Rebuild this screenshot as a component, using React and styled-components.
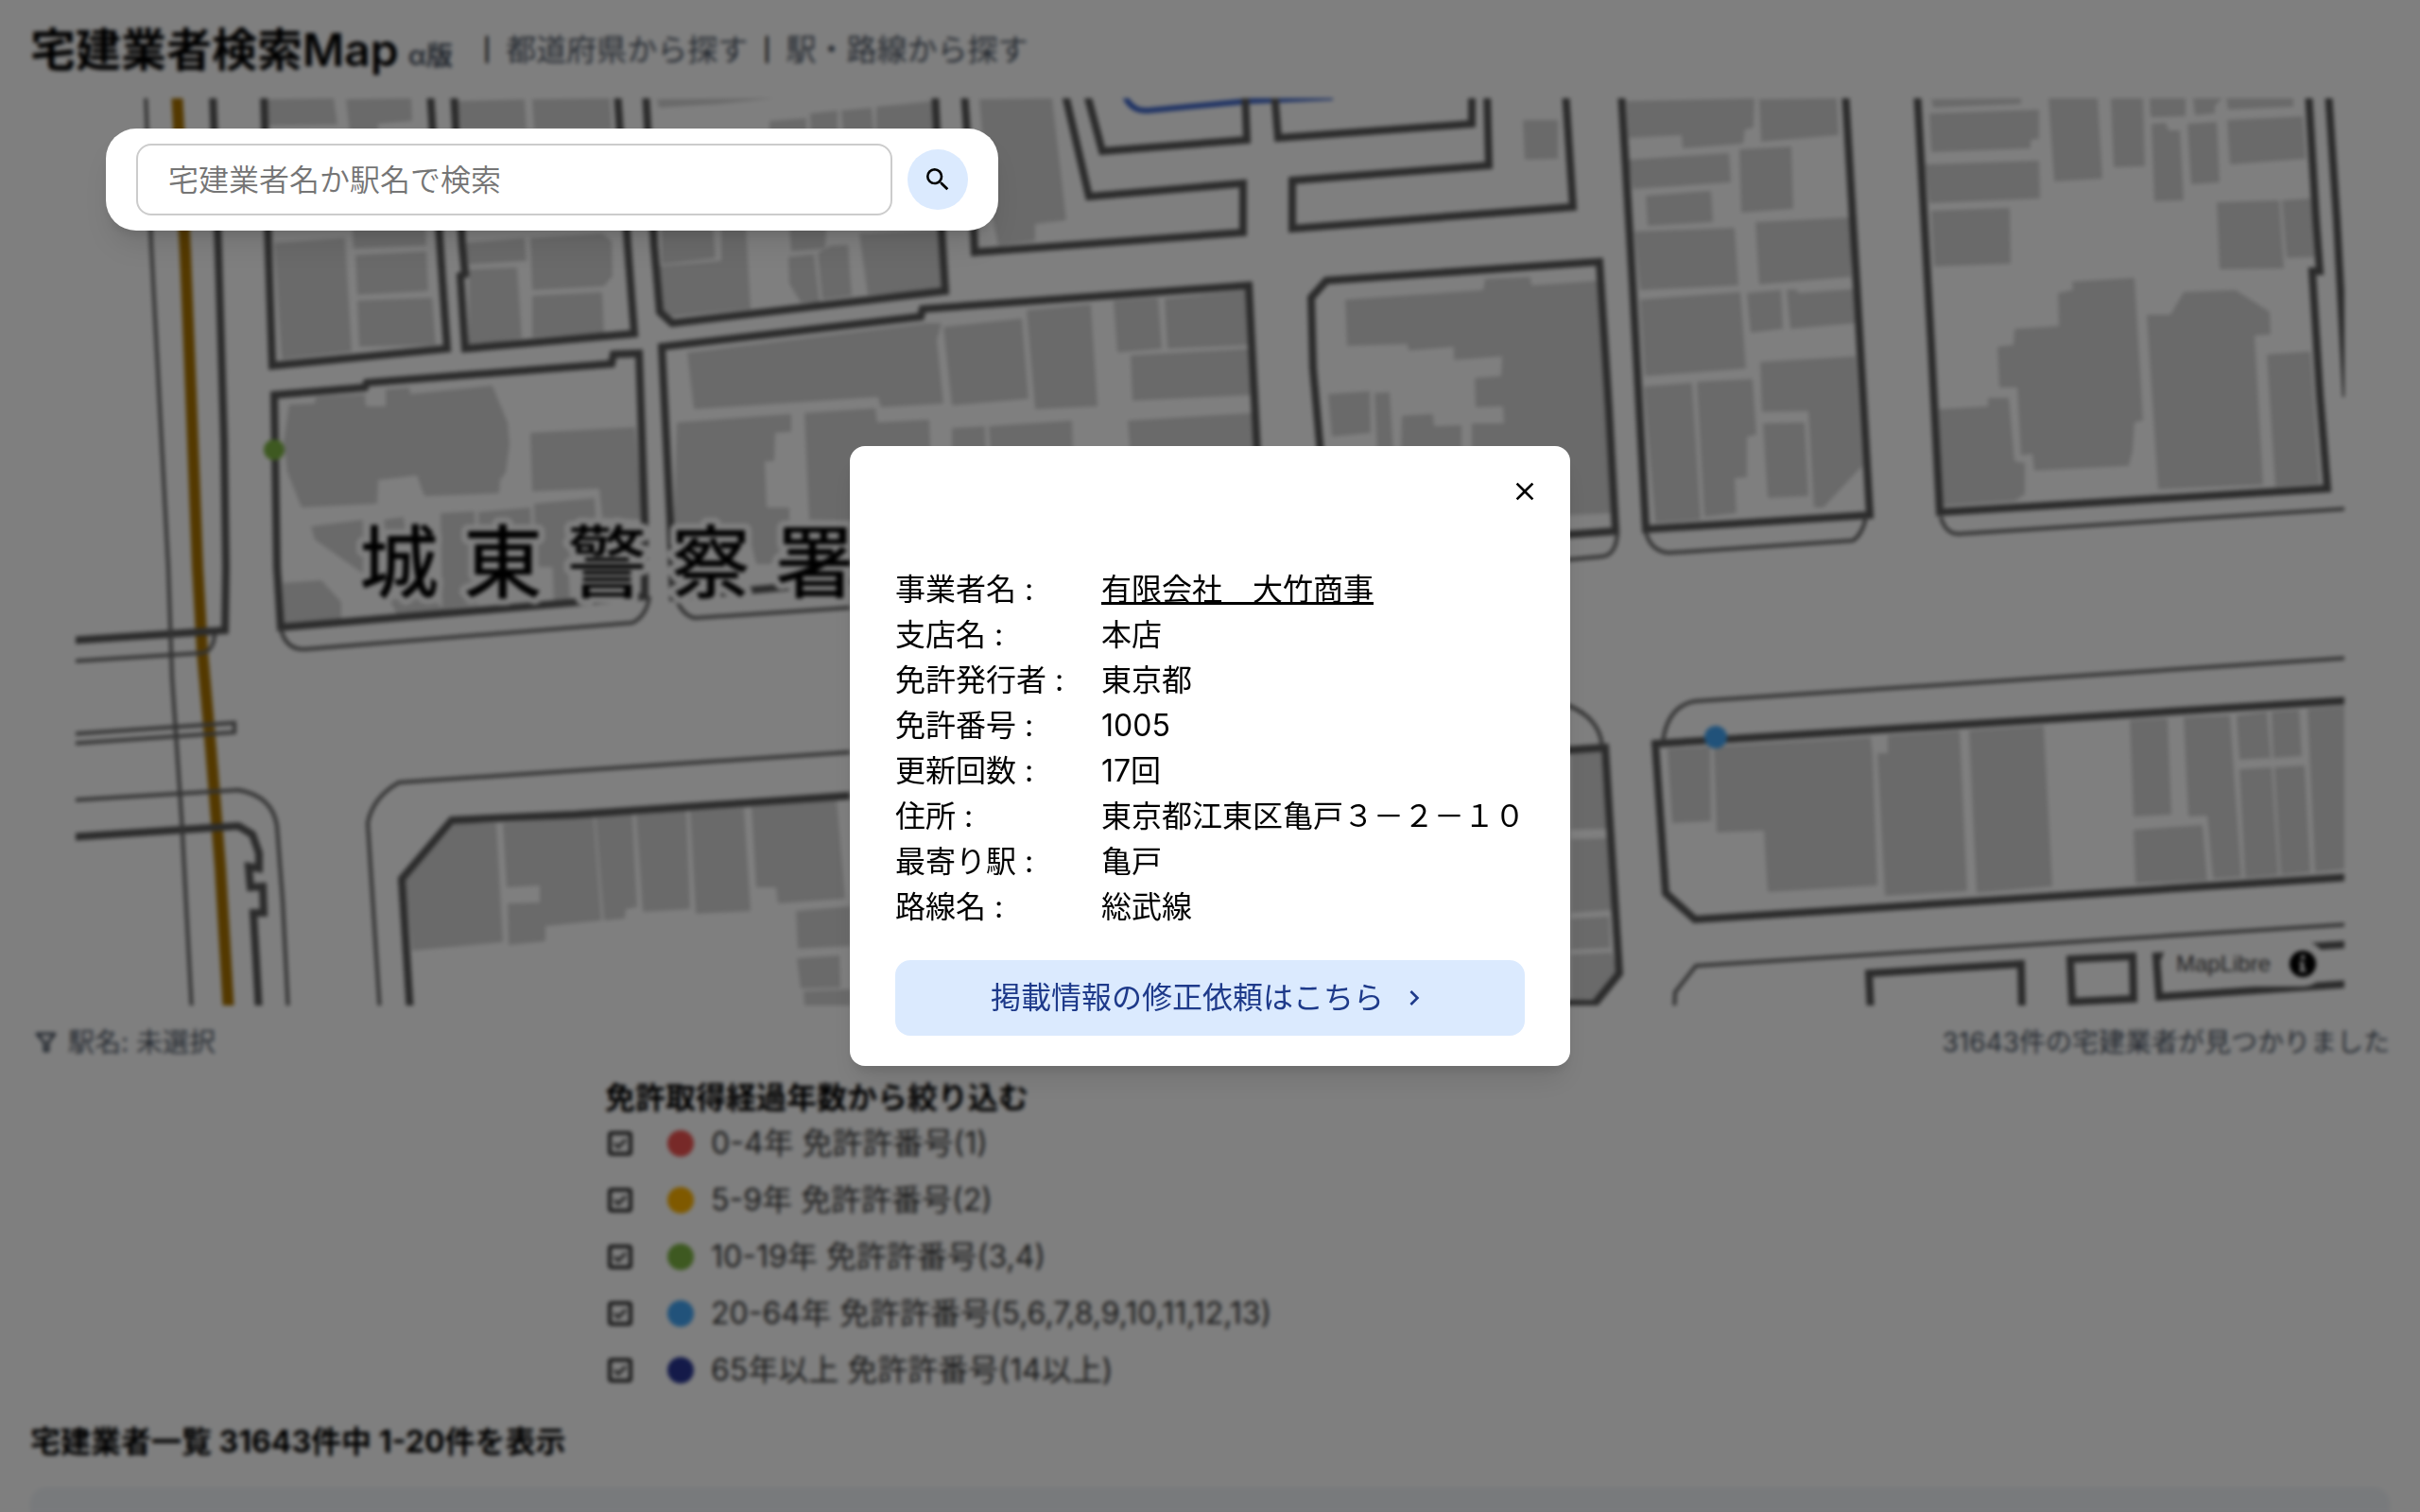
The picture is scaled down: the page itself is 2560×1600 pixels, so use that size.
import React, { useState } from "react";
import styled, { createGlobalStyle } from "styled-components";
import { MdChevronRight, MdClose, MdSearch } from "react-icons/md";

const css = {
  font: `Inter, "Noto Sans CJK JP", sans-serif`,
  text: "#000",
  subText: "#4b5563",
  primaryLight: "#dbeafe",
  primaryDark: "#1e3a8a",
  shadow:
    "0 20px 30px -6px rgba(0, 0, 0, 0.1), 0 8px 12px -4px rgba(0, 0, 0, 0.1)",
};

const years = [
  { id: "y0", color: "#ef5350", label: "0-4年 免許許番号(1)" },
  { id: "y5", color: "#ffb300", label: "5-9年 免許許番号(2)" },
  { id: "y10", color: "#7cb342", label: "10-19年 免許許番号(3,4)" },
  {
    id: "y20",
    color: "#42a5f5",
    label: "20-64年 免許許番号(5,6,7,8,9,10,11,12,13)",
  },
  { id: "y65", color: "#283593", label: "65年以上 免許許番号(14以上)" },
];

const details = [
  { name: "事業者名", value: "有限会社　大竹商事", href: "#company" },
  { name: "支店名", value: "本店" },
  { name: "免許発行者", value: "東京都" },
  { name: "免許番号", value: "1005" },
  { name: "更新回数", value: "17回" },
  { name: "住所", value: "東京都江東区亀戸３－２－１０" },
  { name: "最寄り駅", value: "亀戸" },
  { name: "路線名", value: "総武線" },
];

// building footprints
const buildings = [
  "282,105 353,104 357,132 284,133",
  "366,105 435,104 436,128 400,131 400,140 370,140",
  "290,257 365,252 372,372 298,380",
  "372,225 449,225 451,260 374,263",
  "376,270 451,266 453,308 378,312",
  "378,318 457,315 461,365 380,367",
  "484,107 555,105 557,137 488,137",
  "563,105 645,104 647,137 565,137",
  "492,257 555,252 557,276 496,280",
  "561,252 637,247 647,255 648,292 639,303 563,307",
  "496,285 547,283 552,358 496,367",
  "563,313 637,309 639,352 563,357",
  "306,428 333,427 334,420 386,417 387,430 408,430 408,412 433,410 434,417 521,408 527,423 537,447 539,470 535,500 529,508 528,522 449,525 441,503 400,508 399,533 319,537 304,500 300,467",
  "561,458 672,452 680,550 637,548 634,517 563,520",
  "329,557 384,550 384,607 333,571",
  "406,550 427,547 429,560 406,562",
  "466,543 502,541 505,640 468,645",
  "506,542 561,537 563,600 508,600",
  "565,533 629,527 634,600 567,600",
  "299,617 340,614 361,637 361,655 301,660",
  "412,635 450,628 470,645 420,650",
  "584,585 600,581 603,635 586,637",
  "695,105 820,104 760,110 697,114",
  "814,128 853,125 853,140 814,140",
  "857,120 886,117 886,140 858,140",
  "890,117 922,114 924,140 892,140",
  "927,113 987,107 991,140 927,140",
  "700,240 754,240 757,273 700,280",
  "763,240 789,240 794,327 709,335 697,327 697,282 763,276",
  "835,240 874,240 873,263 837,266",
  "834,272 861,269 867,320 847,320 835,300",
  "865,268 879,260 897,259 901,313 870,317",
  "909,247 994,243 996,307 918,312",
  "1036,105 1113,104 1128,233 1095,237 1095,255 1056,260 1044,200",
  "727,373 980,342 996,342 991,360 998,427 932,431 929,420 734,433",
  "998,346 1081,337 1088,422 1007,429",
  "1086,328 1154,322 1161,430 1095,433",
  "1178,318 1225,315 1229,369 1182,373",
  "1232,316 1320,307 1322,365 1235,369",
  "1196,376 1322,369 1324,418 1198,424",
  "1193,445 1324,437 1327,483 1196,483",
  "716,447 837,438 837,457 820,458 819,488 809,488 811,537 835,537 835,567 815,597 800,597 791,560 713,560",
  "851,437 926,432 928,447 983,444 987,553 856,550",
  "1007,453 1042,451 1043,480 1007,480",
  "1046,451 1134,445 1135,480 1048,480",
  "1611,127 1648,127 1648,168 1613,169",
  "1423,317 1569,307 1571,295 1619,293 1620,302 1692,297 1704,543 1557,550 1557,448 1591,448 1590,430 1561,431 1560,400 1588,398 1589,377 1538,381 1538,367 1490,371 1489,364 1425,366",
  "1405,417 1449,414 1450,458 1409,462",
  "1454,416 1470,415 1474,480 1457,480",
  "1483,440 1516,438 1517,451 1546,450 1546,480 1482,480",
  "1721,107 1856,104 1855,135 1846,137 1844,152 1780,157 1779,143 1723,146",
  "1861,105 1943,104 1945,143 1863,150",
  "1723,169 1829,162 1831,193 1727,200",
  "1741,207 1810,202 1812,235 1743,239",
  "1840,158 1895,155 1897,221 1842,225",
  "1729,245 1835,241 1839,302 1735,307",
  "1857,235 1958,230 1958,293 1861,301",
  "1735,317 1841,309 1847,390 1740,398",
  "1848,310 1884,307 1886,348 1852,352",
  "1890,307 1899,306 1903,310 1960,306 1962,342 1894,348",
  "1862,383 1963,377 1970,493 1929,537 1919,537 1913,435 1864,436",
  "1865,448 1909,447 1913,525 1870,527",
  "1739,409 1790,405 1799,550 1751,553",
  "1795,404 1854,401 1858,460 1848,462 1848,505 1835,506 1837,543 1803,547",
  "2043,105 2138,104 2138,110 2045,114",
  "2041,120 2157,116 2157,147 2148,148 2148,157 2043,161",
  "2037,174 2157,170 2158,210 2041,215",
  "2043,223 2126,220 2127,279 2046,282",
  "2167,104 2219,104 2224,189 2173,192",
  "2233,104 2267,104 2269,176 2236,177",
  "2274,104 2312,104 2312,123 2275,124",
  "2276,131 2291,130 2294,138 2306,138 2310,212 2279,213",
  "2320,104 2351,104 2343,112 2343,120 2322,122",
  "2355,104 2426,104 2426,113 2357,116",
  "2314,131 2345,129 2348,193 2318,195",
  "2356,127 2436,123 2439,168 2359,174",
  "2345,214 2411,212 2416,284 2348,285",
  "2414,212 2444,210 2448,272 2419,273",
  "2192,298 2258,294 2267,445 2258,447 2256,477 2252,493 2152,498 2150,480 2138,482 2134,410 2115,410 2113,367 2130,365 2131,348 2178,345 2177,310 2193,307",
  "2271,333 2296,333 2310,309 2365,307 2401,330 2402,354 2385,355 2394,513 2283,518",
  "2398,375 2444,372 2454,512 2407,515",
  "2051,433 2103,430 2103,421 2125,421 2131,488 2142,490 2142,523 2132,530 2055,535",
  "1764,792 1809,790 1810,869 1769,871",
  "1813,790 1979,780 1981,800 1986,937 1870,944 1866,879 1816,881",
  "1997,778 2073,773 2081,943 1994,948 1986,797 1997,797",
  "2083,773 2162,768 2171,938 2091,945",
  "2253,762 2293,760 2297,862 2257,864",
  "2310,759 2359,757 2371,928 2341,930 2335,863 2315,864",
  "2257,878 2330,873 2335,932 2259,935",
  "2366,757 2398,753 2402,802 2369,804",
  "2403,753 2432,751 2435,800 2405,802",
  "2369,814 2403,812 2410,926 2375,929",
  "2406,812 2438,810 2444,923 2413,926",
  "2441,750 2480,747 2480,920 2449,923",
  "1662,797 1694,795 1700,877 1662,878",
  "1662,888 1700,887 1705,963 1662,966",
  "1662,972 1702,970 1703,1003 1662,1005",
  "1662,1010 1705,1008 1711,1028 1687,1057 1662,1058",
  "482,871 525,871 532,997 436,1006 429,931",
  "532,871 628,864 636,974 577,980 577,996 538,1000 537,956 571,955 571,937 536,939",
  "630,864 669,862 674,960 662,962 661,972 639,974",
  "673,862 726,858 730,962 680,965",
  "730,858 787,855 794,964 736,967",
  "795,854 885,847 894,951 823,956 821,939 800,939",
  "842,964 900,959 900,1001 844,1004",
  "843,1014 888,1011 889,1045 847,1046",
  "850,1049 900,1047 900,1064 851,1064",
];

// block outlines
const blocks = [
  "M225 96 231 267 237 467 239 600 238 667 72 678",
  "M72 886 252 874 267 883 274 903 274 919 263 917 265 939 278 938 279 966 268 966 271 1017 274 1072",
  "M279 96 284 267 288 387 473 369 466 267 455 96",
  "M480 96 489 260 492 290 487 292 492 369 671 353 664 260 653 96",
  "M683 96 692 260 698 330 711 342 1000 308 996 243 989 96",
  "M1020 96 1030 243 1031 267 1315 246 1315 194 1152 208 1126 96",
  "M1149 96 1166 160 1319 148 1317 96",
  "M1348 96 1352 146 1557 131 1557 96",
  "M1573 96 1575 175 1367 191 1367 242 1664 219 1656 96",
  "M1397 480 1389 390 1387 315 1403 297 1692 277 1702 433 1709 562 1640 567",
  "M1715 96 1727 300 1741 560 1978 545 1964 300 1952 96",
  "M2028 96 2043 367 2052 542 2462 517 2454 417 2446 287 2454 287 2450 233 2442 96",
  "M2463 96 2472 233 2482 420",
  "M297 664 293 600 290 418 386 410 388 405 647 385 649 375 676 374 682 550 682 631Z",
  "M900 615 712 632 709 550 700 367 974 335 976 327 1321 302 1330 480",
  "M434 1072 425 930 478 868 608 862 899 842",
  "M1655 794 1698 791 1713 1030 1687 1062 1655 1062",
  "M2488 741 1751 787 1762 945 1793 973 2488 928",
  "M1979 1072 1977 1030 2138 1020 2139 1072",
  "M2190 1015 2256 1012 2257 1057 2192 1060Z",
  "M2488 999 2281 1012 2284 1055 2488 1041",
];

// kerbs and road edges
const kerbs = [
  "M154 96 160 260 178 600 182 717 192 864 203 1072",
  "M227 671Q226 689 214 691L72 700",
  "M72 777 248 765 248 775 72 787",
  "M72 847 252 836Q288 842 293 874L299 953 305 1072",
  "M1711 563Q1710 588 1694 589L1650 593",
  "M1741 563Q1746 583 1765 585L1960 572Q1970 566 1974 547",
  "M2053 547Q2058 565 2072 565L2488 538",
  "M297 665Q302 688 323 687L669 659Q684 652 687 631",
  "M713 624Q718 650 735 654L899 643",
  "M402 1072 389 871Q394 844 422 828L899 796",
  "M1655 745Q1692 758 1695 790",
  "M1759 785Q1764 747 1793 742L2488 696",
  "M1771 1072 1772 1050 1794 1022 2488 978",
];

const stationLabel = [
  { char: "城", x: 422 },
  { char: "東", x: 532 },
  { char: "警", x: 642 },
  { char: "察", x: 752 },
  { char: "署", x: 862 },
];

function TownMap() {
  return (
    <Canvas
      viewBox="80 104 2400 960"
      preserveAspectRatio="xMidYMid slice"
      role="img"
      aria-label="地図"
    >
      <g fill="#d4d4d4">
        {buildings.map((points) => (
          <polygon key={points} points={points} />
        ))}
      </g>
      <path
        d="M187 96 196 267 202 417 209 600 214 689 223 792 233 917 242 1072"
        fill="none"
        stroke="#a87200"
        strokeWidth="12"
      />
      <path
        d="M1188 96Q1194 118 1214 117L1320 107 1410 103"
        fill="none"
        stroke="#3c64c8"
        strokeWidth="6"
      />
      <g fill="none" stroke="#585858" strokeWidth="8">
        {blocks.map((d) => (
          <path key={d} d={d} />
        ))}
      </g>
      <g fill="none" stroke="#666" strokeWidth="4">
        {kerbs.map((d) => (
          <path key={d} d={d} />
        ))}
      </g>
      <LabelGroup>
        {stationLabel.map(({ char, x }) => (
          <text key={char} x={x} y="626">
            {char}
          </text>
        ))}
      </LabelGroup>
      <circle cx="290" cy="476" r="11" fill="#7cb342" />
      <circle cx="1815" cy="780" r="12" fill="#42a5f5" />
    </Canvas>
  );
}

function FilterIcon() {
  return (
    <svg viewBox="0 0 32 32" fill="none" aria-hidden="true">
      <path
        d="M7 7h19l-7 9v9h-4v-9z"
        stroke="currentColor"
        strokeWidth="3"
        strokeLinejoin="round"
      />
    </svg>
  );
}

function CheckIcon({ checked }) {
  return (
    <svg viewBox="0 0 32 32" fill="none" aria-hidden="true">
      <rect
        x="5"
        y="5"
        width="22"
        height="22"
        rx="2"
        stroke="currentColor"
        strokeWidth="4"
      />
      {checked && (
        <path d="M10 16l4 4 8-8" stroke="currentColor" strokeWidth="3" />
      )}
    </svg>
  );
}

function YearFilter() {
  const [checked, setChecked] = useState({
    y0: true,
    y5: true,
    y10: true,
    y20: true,
    y65: true,
  });

  return (
    <Filter>
      <h2>免許取得経過年数から絞り込む</h2>
      <ul>
        {years.map(({ id, color, label }) => (
          <li key={id}>
            <label htmlFor={id}>
              <span className="box">
                <input
                  id={id}
                  type="checkbox"
                  checked={checked[id]}
                  onChange={() => {
                    setChecked({ ...checked, [id]: !checked[id] });
                  }}
                />
                <CheckIcon checked={checked[id]} />
              </span>
              <Dot $color={color} />
              {label}
            </label>
          </li>
        ))}
      </ul>
    </Filter>
  );
}

function CompanyDialog({ onClose }) {
  return (
    <Overlay>
      <Dialog role="dialog" aria-modal="true" aria-label="事業者情報">
        <div className="dialog-header">
          <button type="button" aria-label="閉じる" onClick={onClose}>
            <MdClose />
          </button>
        </div>
        <div className="dialog-body">
          <table>
            <tbody>
              {details.map(({ name, value, href }) => (
                <tr key={name}>
                  <th scope="row">{name} :</th>
                  <td>{href ? <a href={href}>{value}</a> : value}</td>
                </tr>
              ))}
            </tbody>
          </table>
          <RequestButton type="button">
            掲載情報の修正依頼はこちら
            <MdChevronRight />
          </RequestButton>
        </div>
      </Dialog>
    </Overlay>
  );
}

function App() {
  const [open, setOpen] = useState(true);

  return (
    <Page>
      <GlobalStyle />
      <Header>
        <h1>宅建業者検索Map</h1>
        <span className="version">α版</span>
        <nav>
          <span>|</span>
          <a href="#prefecture">都道府県から探す</a>
          <span>|</span>
          <a href="#station">駅・路線から探す</a>
        </nav>
      </Header>
      <MapArea>
        <TownMap />
        <SearchForm onSubmit={(e) => e.preventDefault()}>
          <input
            type="text"
            aria-label="宅建業者名か駅名で検索"
            placeholder="宅建業者名か駅名で検索"
          />
          <button type="submit" aria-label="検索">
            <MdSearch />
          </button>
        </SearchForm>
        <Attribution>
          <a href="#maplibre">MapLibre</a>
          <svg viewBox="0 0 24 24" aria-hidden="true">
            <circle cx="12" cy="12" r="12" fill="#000" />
            <circle cx="12" cy="6" r="2" fill="#fff" />
            <path d="M9 10h4v7h2v2H9v-2h1v-5H9z" fill="#fff" />
          </svg>
        </Attribution>
      </MapArea>
      <Status>
        <span>
          <FilterIcon />
          駅名: 未選択
        </span>
        <span>31643件の宅建業者が見つかりました</span>
      </Status>
      <YearFilter />
      <Results>
        <h2>宅建業者一覧 31643件中 1-20件を表示</h2>
        <div className="card" />
      </Results>
      {open && <CompanyDialog onClose={() => setOpen(false)} />}
    </Page>
  );
}

export default App;

const GlobalStyle = createGlobalStyle`
  * {
    box-sizing: border-box;
    margin: 0;
    padding: 0;
  }

  body {
    background-color: #fff;
    color: ${css.text};
    font-family: ${css.font};
    font-size: 32px;
    line-height: 48px;
  }

  button,
  input {
    font: inherit;
    color: inherit;
  }

  button {
    border: none;
    background-color: transparent;
    cursor: pointer;
  }

  svg {
    display: block;
    flex-shrink: 0;
  }
`;

const Page = styled.div`
  height: 100vh;
  overflow: hidden;
`;

const Header = styled.header`
  display: flex;
  align-items: center;
  height: 104px;
  padding: 2px 32px 0;

  h1 {
    font-size: 48px;
    font-weight: 600;
  }

  .version {
    margin: 12px 32px 0 10px;
    color: ${css.subText};
    font-size: 28px;
    font-weight: 600;
  }

  nav {
    display: flex;
    gap: 16px;
  }

  nav span {
    font-size: 24px;
    font-weight: 500;
  }

  nav a {
    color: ${css.subText};
    text-decoration: none;
  }
`;

const MapArea = styled.section`
  position: relative;
  height: 60vh;
  margin: 0 80px;
`;

const Canvas = styled.svg`
  width: 100%;
  height: 100%;
`;

const LabelGroup = styled.g`
  fill: #000;
  stroke: #fff;
  stroke-width: 14px;
  stroke-linejoin: round;
  paint-order: stroke;
  font-family: "Noto Sans CJK JP", sans-serif;
  font-size: 84px;
  font-weight: 500;
  text-anchor: middle;
`;

const SearchForm = styled.form`
  position: absolute;
  top: 32px;
  left: 32px;
  z-index: 9;
  display: flex;
  align-items: center;
  gap: 16px;
  padding: 16px 32px;
  border-radius: 32px;
  background-color: #fff;
  box-shadow: ${css.shadow};

  input {
    width: 800px;
    height: 76px;
    padding: 0 32px;
    border: 2px solid #ccc;
    border-radius: 16px;
    font-weight: 350;
  }

  input::placeholder {
    color: #757575;
  }

  button {
    display: flex;
    align-items: center;
    justify-content: center;
    width: 64px;
    height: 64px;
    border-radius: 50%;
    background-color: ${css.primaryLight};
  }
`;

const Attribution = styled.div`
  position: absolute;
  right: 20px;
  bottom: 20px;
  display: flex;
  align-items: center;
  gap: 20px;
  height: 48px;
  padding: 0 10px 0 16px;
  border-radius: 24px;
  background-color: #fff;
  font-family: "Liberation Sans", sans-serif;
  font-size: 24px;

  a {
    color: #404040;
    text-decoration: none;
  }

  svg {
    width: 28px;
    height: 28px;
  }
`;

const Status = styled.div`
  display: flex;
  justify-content: space-between;
  padding: 18px 32px 14px;
  color: ${css.subText};
  font-size: 28px;
  line-height: 42px;

  span {
    display: flex;
    align-items: center;
    gap: 8px;
  }

  svg {
    width: 32px;
    height: 32px;
  }
`;

const Filter = styled.section`
  width: 50%;
  margin: 0 auto;

  h2 {
    font-size: 32px;
    font-weight: 700;
  }

  ul {
    list-style: none;
  }

  li {
    padding-bottom: 12px;
  }

  label {
    display: flex;
    align-items: center;
    color: #333;
    cursor: pointer;
  }

  .box {
    display: grid;
    margin-right: 34px;
  }

  .box > * {
    grid-area: 1 / 1;
    width: 32px;
    height: 32px;
  }

  .box input {
    opacity: 0;
  }
`;

const Dot = styled.span`
  width: 28px;
  height: 28px;
  margin-right: 18px;
  border-radius: 50%;
  background-color: ${(props) => props.$color};
`;

const Results = styled.section`
  padding: 16px 32px;

  h2 {
    margin-bottom: 24px;
    font-size: 32px;
    font-weight: 700;
  }

  .card {
    height: 320px;
    border-radius: 16px;
    background-color: #f1f5f9;
  }
`;

const Overlay = styled.div`
  position: fixed;
  inset: 0;
  z-index: 8;
  display: flex;
  align-items: center;
  justify-content: center;
  background-color: rgba(0, 0, 0, 0.5);
  backdrop-filter: blur(2px);
`;

const Dialog = styled.div`
  padding: 32px;
  border-radius: 16px;
  background-color: #fff;
  box-shadow: ${css.shadow};
  font-weight: 380;

  .dialog-header {
    display: flex;
    align-items: flex-start;
    justify-content: flex-end;
    height: 96px;
  }

  .dialog-body {
    padding: 0 16px;
  }

  table {
    border-collapse: collapse;
  }

  th {
    width: 218px;
    font-weight: inherit;
    text-align: left;
  }

  td a {
    color: inherit;
  }
`;

const RequestButton = styled.button`
  display: flex;
  align-items: center;
  justify-content: center;
  gap: 16px;
  width: 100%;
  height: 80px;
  margin-top: 32px;
  border-radius: 16px;
  background-color: ${css.primaryLight};
  color: ${css.primaryDark};
`;
